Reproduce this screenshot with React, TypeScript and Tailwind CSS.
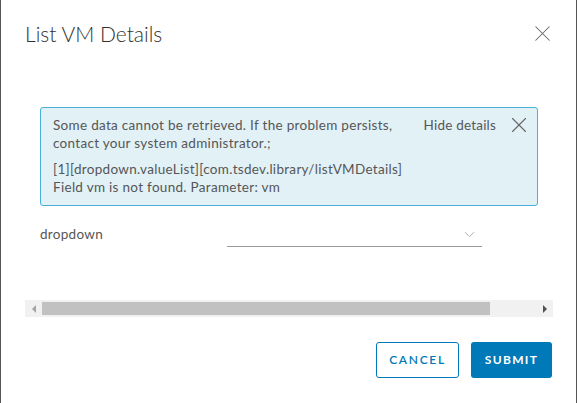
import { ChevronDown, X } from 'lucide-react';

export default function App() {
  return (
    <div className="w-[578px] h-[403px] bg-white overflow-hidden font-['Lato',sans-serif]">
      <div className="w-[577px] h-[403px] border-l border-r border-[#555] flex flex-col">
        {/* Header */}
        <div className="flex items-center justify-between pl-6 pr-[20px] pt-[9px] h-[58px]">
          <h1 className="text-[21px] font-light text-[#313131]">List VM Details</h1>
          <X className="w-[27px] h-[27px] text-[#666]" strokeWidth={0.9} />
        </div>

        {/* Alert */}
        <div className="mt-[49px] ml-[39px] mr-[38px] h-[99px] bg-[#e1f1f6] border border-[#49afd9] rounded-[3px] flex pl-[12px] pr-[5px] pt-[8px] text-[13.5px] leading-[18px] text-[#565656]">
          <div className="flex-1 tracking-[0.3px]">
            <p>Some data cannot be retrieved. If the problem persists,<br />contact your system administrator.;</p>
            <p className="mt-[8px]">[1][dropdown.valueList][com.tsdev.library/listVMDetails]<br />Field vm is not found. Parameter: vm</p>
          </div>
          <span className="mr-[10px] tracking-[0.2px]">Hide details</span>
          <X className="w-[26px] h-[26px] text-[#666] -mt-[4px]" strokeWidth={1} />
        </div>

        {/* Dropdown row */}
        <div className="flex items-start mt-[18px] ml-[39px]">
          <span className="w-[187px] text-[13.5px] text-[#565656] tracking-[0.3px]">dropdown</span>
          <div className="w-[255px] h-[23px] border-b border-[#9a9a9a] flex justify-end items-start pr-[4px] pt-[2px]">
            <ChevronDown className="w-[17px] h-[17px] text-[#999]" strokeWidth={1} />
          </div>
        </div>

        {/* Scrollbar */}
        <div className="mt-[53px] ml-[24px] w-[528px] h-[17px] bg-[#f1f1f1] flex items-center">
          <div className="w-[17px] flex justify-center">
            <div className="w-0 h-0 border-y-[4px] border-y-transparent border-r-[4px] border-r-[#a3a3a3]" />
          </div>
          <div className="w-[448px] h-[13px] bg-[#c1c1c1]" />
          <div className="flex-1" />
          <div className="w-[17px] flex justify-center">
            <div className="w-0 h-0 border-y-[4px] border-y-transparent border-l-[4px] border-l-[#505050]" />
          </div>
        </div>

        {/* Footer */}
        <div className="flex justify-end gap-[12px] mt-[25px] pr-[24px]">
          <button className="w-[83px] h-[36px] border border-[#0079b8] rounded-[3px] text-[#0079b8] text-[12px] font-semibold tracking-[1.7px]">
            CANCEL
          </button>
          <button className="w-[81px] h-[36px] bg-[#0079b8] rounded-[3px] text-white text-[12px] font-bold tracking-[1.3px]">
            SUBMIT
          </button>
        </div>
      </div>
    </div>
  );
}
